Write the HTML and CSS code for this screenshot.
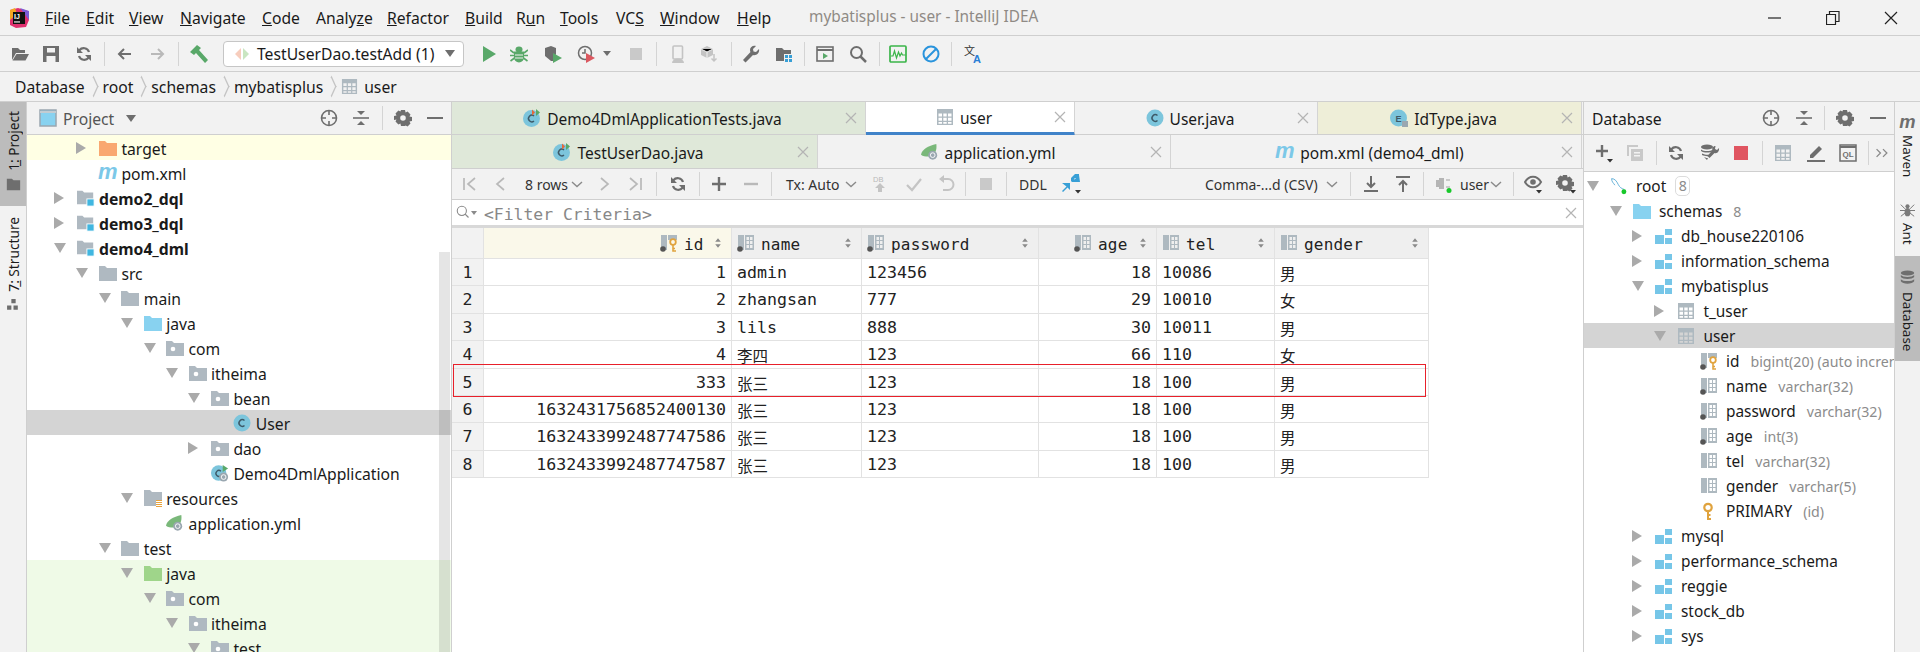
FILE: index.html
```html
<!DOCTYPE html>
<html lang="en">
<head>
<meta charset="utf-8">
<title>mybatisplus - user - IntelliJ IDEA</title>
<link rel="stylesheet" href="styles.css">
</head>
<body>
<svg class="defs" aria-hidden="true">
  <symbol id="open" viewBox="0 0 18 18"><path d="M1 3h6l2 2h5v3H5l-4 7z" fill="#6e6e6e"/><path d="M5.500 9H18l-3.500 6.500H1.500z" fill="#6e6e6e"/></symbol>
  <symbol id="save" viewBox="0 0 18 18"><path fill-rule="evenodd" d="M1 1h16v16H1zM5 3v4.500h8V3zM4.500 11v6h9v-6z" fill="#6e6e6e"/></symbol>
  <symbol id="sync" viewBox="0 0 18 18"><g fill="none" stroke="#6e6e6e" stroke-width="2.200"><path d="M14 7a5.600 5.600 0 0 0-9.600-1.800L3.500 6.400"/><path d="M4 11a5.600 5.600 0 0 0 9.600 1.800l1-1.200"/></g><path d="M2 2v6h6zM16 16v-6h-6z" fill="#6e6e6e"/></symbol>
  <symbol id="back" viewBox="0 0 18 18"><path d="M16 9H4M9 4 4 9l5 5" fill="none" stroke="#6e6e6e" stroke-width="2"/></symbol>
  <symbol id="fwd" viewBox="0 0 18 18"><path d="M2 9h12M9 4l5 5-5 5" fill="none" stroke="#b9b9b9" stroke-width="2"/></symbol>
  <symbol id="hammer" viewBox="0 0 18 18"><path d="M0 7 7 0l4 3-2 2 9 10-3 3L6 8 4 10z" fill="#59a869"/></symbol>
  <symbol id="run" viewBox="0 0 18 18"><path d="M3 1l13 8-13 8z" fill="#59a869"/></symbol>
  <symbol id="bug" viewBox="0 0 18 18"><g fill="#59a869"><ellipse cx="9" cy="4.500" rx="3.500" ry="3"/><path d="M4 6.500h10v6a5 5 0 0 1-10 0z"/></g><path d="M0 5l4 3M18 5l-4 3M0 10.500h4M18 10.500h-4M.5 16l4-3M17.500 16l-4-3" stroke="#59a869" stroke-width="1.600"/><path d="M5 10h8M5 13h8" stroke="#f2f2f2" stroke-width="1.200"/></symbol>
  <symbol id="cover" viewBox="0 0 18 18"><path d="M1 3l6-2 5 2v6l-3 7H7l-6-5z" fill="#6e6e6e"/><path d="M9 8l9 5-9 5z" fill="#59a869"/></symbol>
  <symbol id="prof" viewBox="0 0 18 18"><circle cx="8" cy="8" r="6.500" fill="none" stroke="#6e6e6e" stroke-width="1.500"/><path d="M8 4v4H5" fill="none" stroke="#6e6e6e" stroke-width="1.500"/><path d="M9 8l9 5-9 5z" fill="#db5860"/></symbol>
  <symbol id="stop" viewBox="0 0 18 18"><rect x="3" y="3" width="12" height="12" fill="#c9c9c9"/></symbol>
  <symbol id="phone" viewBox="0 0 18 18"><rect x="4" y="1" width="9.500" height="13" rx="1" fill="none" stroke="#c4c4c4" stroke-width="1.600"/><path d="M3 18a6 4.500 0 0 1 12 0z" fill="#c4c4c4"/></symbol>
  <symbol id="cube" viewBox="0 0 18 18"><path d="M7 1l6 3v6l-6 3-6-3V4z" fill="#c4c4c4"/><path d="M7 7v6M1 4l6 3 6-3" stroke="#f2f2f2"/><path d="M14 9v7M11.500 13.500 14 16l2.500-2.500" fill="none" stroke="#c4c4c4" stroke-width="1.500"/></symbol>
  <symbol id="wrench" viewBox="0 0 18 18"><path d="M17 4l-3 3-2.500-.5L11 4l3-3c-3-1-6 1-6 4 0 1 .2 1.500.5 2L1 15l2.500 2.500L11 10c3 1 7-2 6-6z" fill="#6e6e6e"/></symbol>
  <symbol id="fgrid" viewBox="0 0 18 18"><path d="M1 3h6l2 2h7v4H9v7H1z" fill="#6e6e6e"/><path d="M10 10h3v3h-3zM14 10h3v3h-3zM10 14h3v3h-3zM14 14h3v3h-3z" fill="#389fd6"/></symbol>
  <symbol id="term" viewBox="0 0 18 18"><rect x="1" y="2" width="16" height="14" fill="none" stroke="#6e6e6e" stroke-width="1.600"/><path d="M1 5h16" stroke="#6e6e6e" stroke-width="2"/><path d="M7 8l5 3-5 3z" fill="#59a869"/></symbol>
  <symbol id="search" viewBox="0 0 18 18"><circle cx="7.500" cy="7.500" r="5.500" fill="none" stroke="#6e6e6e" stroke-width="2"/><path d="M11.500 11.500 17 17" stroke="#6e6e6e" stroke-width="2.500"/></symbol>
  <symbol id="wave" viewBox="0 0 18 18"><rect x="1" y="1" width="16" height="16" rx="1" fill="none" stroke="#3bb54a" stroke-width="1.700"/><path d="M2 11h2l1.500-5 2 7 2-6 1.500 4 1.500-3 1 2h3" fill="none" stroke="#3bb54a" stroke-width="1.200"/></symbol>
  <symbol id="ban" viewBox="0 0 18 18"><circle cx="9" cy="9" r="7.500" fill="none" stroke="#2a94dc" stroke-width="2"/><path d="M4 14 14 4" stroke="#2a94dc" stroke-width="2"/></symbol>
  <symbol id="tbl" viewBox="0 0 18 18"><path fill="#aeb9c0" fill-rule="evenodd" d="M1 1h16v16H1zM2.500 5.500v3h3.500v-3zM7.300 5.500v3h3.400v-3zM12 5.500v3h3.500v-3zM2.500 9.800v3h3.500v-3zM7.300 9.800v3h3.400v-3zM12 9.800v3h3.500v-3zM2.500 14v1.700h3.500V14zM7.300 14v1.700h3.400V14zM12 14v1.700h3.500V14z"/></symbol>
  <symbol id="col" viewBox="0 0 18 18"><rect x="1" y="1" width="6" height="15" fill="#aeb9c0"/><path fill="#aeb9c0" fill-rule="evenodd" d="M8 1h9v15H8zM9.500 3v3h2.500V3zM13 3v3h2.500V3zM9.500 7v3h2.500V7zM13 7v3h2.500V7zM9.500 11v3h2.500v-3zM13 11v3h2.500v-3z"/></symbol>
  <symbol id="coln" viewBox="0 0 18 18"><use href="#col"/><circle cx="3" cy="15" r="2.800" fill="#555"/></symbol>
  <symbol id="key" viewBox="0 0 18 18"><circle cx="8" cy="5.500" r="3.700" fill="none" stroke="#e0a33e" stroke-width="2.200"/><path d="M8 9v8h3M8 13h2.500" fill="none" stroke="#e0a33e" stroke-width="2"/></symbol>
  <symbol id="colk" viewBox="0 0 18 18"><rect x="1" y="1" width="6" height="15" fill="#aeb9c0"/><path d="M8 1h9v5H8z" fill="#aeb9c0"/><circle cx="3" cy="15" r="2.800" fill="#555"/><circle cx="13" cy="8" r="2.800" fill="none" stroke="#e0a33e" stroke-width="1.800"/><path d="M13 11v6h3M13 14.500h2" fill="none" stroke="#e0a33e" stroke-width="1.600"/></symbol>
  <symbol id="fo" viewBox="0 0 18 18"><path d="M0 2h6l2 2h10v13H0z" fill="#afb9c1"/></symbol>
  <symbol id="fob" viewBox="0 0 18 18"><path d="M0 2h6l2 2h10v13H0z" fill="#88d2f0"/></symbol>
  <symbol id="fog" viewBox="0 0 18 18"><path d="M0 2h6l2 2h10v13H0z" fill="#9fd58a"/></symbol>
  <symbol id="foo" viewBox="0 0 18 18"><path d="M0 2h6l2 2h10v13H0z" fill="#f9a870"/></symbol>
  <symbol id="pkg" viewBox="0 0 18 18"><path d="M0 2h6l2 2h10v13H0z" fill="#afb9c1"/><circle cx="7" cy="10" r="2.300" fill="#fff"/></symbol>
  <symbol id="mod" viewBox="0 0 20 18"><path d="M0 1h6l2 2h10v13H0z" fill="#afb9c1"/><rect x="11" y="10" width="8" height="8" fill="#40b6e0" stroke="#fff"/></symbol>
  <symbol id="res" viewBox="0 0 18 18"><path d="M0 1h6l2 2h10v8h-6v6H0z" fill="#afb9c1"/><path d="M12 11.500h6M12 13.500h6M12 15.500h6M12 17.500h6" stroke="#e8a33d"/></symbol>
  <symbol id="cls" viewBox="0 0 18 18"><circle cx="9" cy="9" r="8.500" fill="#7cc5dc"/><path d="M11.500 6.500a3.300 3.300 0 1 0 0 5" fill="none" stroke="#3d5a68" stroke-width="1.500"/></symbol>
  <symbol id="clst" viewBox="0 0 18 18"><circle cx="8.500" cy="9.500" r="8.500" fill="#7cc5dc"/><path d="M11 7a3.300 3.300 0 1 0 0 5" fill="none" stroke="#3d5a68" stroke-width="1.500"/><path d="M9 .5 12 3.500 9 6.500z" fill="#e6673a"/><path d="M13 0l4 3.500-4 3.500z" fill="#59a869"/></symbol>
  <symbol id="app" viewBox="0 0 20 20"><circle cx="8.500" cy="10" r="8.500" fill="#7cc5dc"/><path d="M11 8a3.300 3.300 0 1 0 0 5" fill="none" stroke="#3d5a68" stroke-width="1.500"/><path d="M13 1l6 4-6 4z" fill="#59a869"/><circle cx="14" cy="14.500" r="5" fill="#9aa7b0"/><circle cx="14" cy="14.500" r="2.600" fill="none" stroke="#fff"/></symbol>
  <symbol id="leaf" viewBox="0 0 20 20"><path d="M0 13C1 7 8 3 17 1c1 6-1 14-9 14-3 0-6 0-8-2z" fill="#7ab87a"/><circle cx="13" cy="13.500" r="5" fill="#9aa7b0"/><circle cx="13" cy="13.500" r="2.600" fill="none" stroke="#fff"/></symbol>
  <symbol id="crosshair" viewBox="0 0 18 18"><circle cx="9" cy="9" r="7.500" fill="none" stroke="#6e6e6e" stroke-width="1.600"/><path d="M9 1v5M9 12v5M1 9h5M12 9h5" stroke="#6e6e6e" stroke-width="1.600"/></symbol>
  <symbol id="coll" viewBox="0 0 18 18"><path d="M1 9h16" stroke="#6e6e6e" stroke-width="1.600"/><path d="M5 2h8l-4 4zM5 16h8l-4-4z" fill="#6e6e6e"/></symbol>
  <symbol id="gear" viewBox="0 0 18 18"><path fill="#6e6e6e" fill-rule="evenodd" d="M7 1h4l.6 2.500 2-1 2.900 2.900-1 2 2.500.6v4l-2.500.6 1 2-2.900 2.900-2-1L11 17H7l-.6-2.500-2 1L1.500 12.600l1-2L0 11V7l2.500-.6-1-2L4.400 1.500l2 1zM9 6.200a2.800 2.800 0 1 0 0 5.600 2.800 2.800 0 0 0 0-5.600z"/></symbol>
  <symbol id="gearc" viewBox="0 0 20 20"><use href="#gear" width="18" height="18"/><path d="M14 16h6l-3 3.500z" fill="#333"/></symbol>
  <symbol id="minus" viewBox="0 0 18 18"><path d="M1 9h16" stroke="#6e6e6e" stroke-width="2"/></symbol>
  <symbol id="first" viewBox="0 0 18 18"><path d="M3 3v12M14 3 7 9l7 6" fill="none" stroke="#b9b9b9" stroke-width="1.700"/></symbol>
  <symbol id="prev" viewBox="0 0 18 18"><path d="M12 3 5 9l7 6" fill="none" stroke="#b9b9b9" stroke-width="1.700"/></symbol>
  <symbol id="next" viewBox="0 0 18 18"><path d="M6 3l7 6-7 6" fill="none" stroke="#b9b9b9" stroke-width="1.700"/></symbol>
  <symbol id="last" viewBox="0 0 18 18"><path d="M15 3v12M4 3l7 6-7 6" fill="none" stroke="#b9b9b9" stroke-width="1.700"/></symbol>
  <symbol id="plus" viewBox="0 0 18 18"><path d="M9 2v14M2 9h14" stroke="#6e6e6e" stroke-width="2.400"/></symbol>
  <symbol id="plusc" viewBox="0 0 20 20"><path d="M8 2v12M2 8h12" stroke="#6e6e6e" stroke-width="2.400"/><path d="M13 16h6l-3 3.500z" fill="#333"/></symbol>
  <symbol id="minusl" viewBox="0 0 18 18"><path d="M2 9h14" stroke="#b9b9b9" stroke-width="2.400"/></symbol>
  <symbol id="vee" viewBox="0 0 18 18"><path d="M4 7l5 4.500L14 7" fill="none" stroke="#8a8a8a" stroke-width="1.400"/></symbol>
  <symbol id="check" viewBox="0 0 18 18"><path d="M2 10l5 5L16 4" fill="none" stroke="#c4c4c4" stroke-width="2.200"/></symbol>
  <symbol id="undo" viewBox="0 0 18 18"><path d="M5 4h6a5 5 0 0 1 0 11H6" fill="none" stroke="#c4c4c4" stroke-width="2"/><path d="M7 0v8L2 4z" fill="#c4c4c4"/></symbol>
  <symbol id="cmp" viewBox="0 0 20 20"><path d="M17 0v4h-4L9 8V4l4-4zM18 8h-8V3l2.500 2.500L17 1z" fill="#389fd6"/><path d="M0 9h8v7l-2.500-2.500L1 18l-1-1 4.500-4.500z" fill="#389fd6"/><path d="M13 16h6l-3 3.500z" fill="#333"/></symbol>
  <symbol id="dl" viewBox="0 0 18 18"><path d="M9 1v10M5 8l4 4 4-4" fill="none" stroke="#6e6e6e" stroke-width="2"/><path d="M2 16h14" stroke="#6e6e6e" stroke-width="2"/></symbol>
  <symbol id="ul" viewBox="0 0 18 18"><path d="M9 17V7M5 10l4-4 4 4" fill="none" stroke="#6e6e6e" stroke-width="2"/><path d="M2 2h14" stroke="#6e6e6e" stroke-width="2"/></symbol>
  <symbol id="conn" viewBox="0 0 18 18"><path d="M1 5h3V3h5v11H4v-2H1z" fill="#b5b5b5"/><path d="M11 4h4v2h-4zM11 11h4v2h-4z" fill="#c9c9c9"/><circle cx="14" cy="15.500" r="2.500" fill="#18c82a"/></symbol>
  <symbol id="eye" viewBox="0 0 20 20"><path d="M1 8c4-7 12-7 16 0-4 7-12 7-16 0z" fill="none" stroke="#6e6e6e" stroke-width="2"/><circle cx="9" cy="8" r="2.800" fill="#6e6e6e"/><path d="M12 16h6l-3 3.500z" fill="#333"/></symbol>
  <symbol id="copy" viewBox="0 0 18 18"><path d="M1 1h11v2H3v9H1z" fill="#c9c9c9"/><path fill="#c9c9c9" fill-rule="evenodd" d="M5 5h12v12H5zM8 8v1.500h6V8zM8 11v1.500h6V11z"/></symbol>
  <symbol id="dbtool" viewBox="0 0 20 18"><ellipse cx="7" cy="3" rx="6" ry="2.500" fill="#6e6e6e"/><path d="M1 5.500c3 2 9 2 12 0v1.500c-3 2-9 2-12 0zM2 9.500c3 1.500 6 1.500 8 1v1.500c-3 .5-6 0-8-1zM4 13c2 1 3 1 4 1l-1 2z" fill="#6e6e6e"/><path d="M19 4l-2 2-2-1 .5-3c-2 0-4 2-3 4l-5 6 2 2 5-5c3 1 5-2 4.500-5z" fill="#6e6e6e"/></symbol>
  <symbol id="red" viewBox="0 0 18 18"><rect x="2" y="2" width="14" height="14" fill="#e05561"/></symbol>
  <symbol id="edit" viewBox="0 0 18 18"><path d="M3 11 12 2l3 3-9 9H3z" fill="#6e6e6e"/><path d="M0 17h18" stroke="#6e6e6e" stroke-width="2"/></symbol>
  <symbol id="mysql" viewBox="0 0 20 22"><path d="M1 2c4 0 6 3 8 7s4 5 7 6l2 3" fill="none" stroke="#4aa3d0" stroke-width="1"/><path d="M1 2c0 4 2 5 4 8" fill="none" stroke="#4aa3d0" stroke-width="1"/><circle cx="16" cy="18" r="3" fill="#18c82a"/></symbol>
  <symbol id="schema" viewBox="0 0 18 18"><rect x="0" y="8" width="9" height="9" fill="#76c6e8"/><rect x="10" y="2" width="7" height="6" fill="#76c6e8"/><rect x="10" y="11" width="7" height="6" fill="#76c6e8"/></symbol>
  <symbol id="spider" viewBox="0 0 18 18"><ellipse cx="9" cy="11" rx="3.500" ry="5" fill="#7a7a7a"/><circle cx="9" cy="4" r="2.500" fill="#7a7a7a"/><path d="M1 2l5 5M17 2l-5 5M0 9h6M18 9h-6M1 16l5-4M17 16l-5-4" stroke="#7a7a7a" stroke-width="1.200"/></symbol>
  <symbol id="dbcyl" viewBox="0 0 18 18"><ellipse cx="9" cy="3.500" rx="8" ry="3" fill="#6e6e6e"/><path d="M1 6c2 3 14 3 16 0v2.500c-2 3-14 3-16 0zM1 11c2 3 14 3 16 0v2.500c-2 4-14 4-16 0z" fill="#6e6e6e"/></symbol>
  <symbol id="wfold" viewBox="0 0 18 18"><path d="M1 2h6l2 2h8v12H1z" fill="#6e6e6e"/></symbol>
  <symbol id="struct" viewBox="0 0 14 14"><path d="M5 1h4v4H5zM1 7h4v4H1zM7 7h4v4H7z" fill="#6e6e6e"/></symbol>
  <symbol id="win" viewBox="0 0 18 18"><rect x="1" y="1" width="16" height="16" fill="#88d2f0" stroke="#9aa7b0" stroke-width="1.500"/><path d="M1 3h16" stroke="#c3ccd2" stroke-width="2"/></symbol>
  <symbol id="search2" viewBox="0 0 18 18"><circle cx="7" cy="7" r="5.500" fill="none" stroke="#8a8a8a" stroke-width="1.300"/><path d="M11 11l4 4" stroke="#8a8a8a" stroke-width="1.500"/></symbol>
  <symbol id="cross" viewBox="0 0 14 14"><path d="M2 2l10 10M12 2 2 12" stroke="#b4b4b4" stroke-width="1.200"/></symbol>
  <symbol id="wmin" viewBox="0 0 14 14"><path d="M0 7h13" stroke="#222" stroke-width="1.200"/></symbol>
  <symbol id="wmax" viewBox="0 0 14 14"><path d="M.5 3.500h9v10h-9zM3.500 3.500v-3h9.500v10h-3.500" fill="none" stroke="#222" stroke-width="1.200"/></symbol>
  <symbol id="wcls" viewBox="0 0 14 14"><path d="M1 1l12 12M13 1 1 13" stroke="#222" stroke-width="1.200"/></symbol>
  <symbol id="sort" viewBox="0 0 10 14"><path d="M5 1l3.500 4.500h-7zM5 13 1.500 8.500h7z" fill="#8a8a8a"/></symbol>
  <symbol id="more" viewBox="0 0 14 14"><path d="M2 4l3 3-3 3M7 4l3 3-3 3" fill="none" stroke="#8a8a8a"/></symbol>
  <symbol id="diamonds" viewBox="0 0 18 18"><path d="M8 3 2 9l6 6z" fill="#f7cdbd"/><path d="M10 3l6 6-6 6z" fill="#c9e6c1"/></symbol>
</svg>

<div class="app">
  <header class="titlebar">
    <svg class="logo" viewBox="0 0 20 20"><path d="M1 2 9 0l10 3 1 9-3 7-10 1-6-3z" fill="#e0316f"/><path d="M11 0l9 3v9z" fill="#7a5bd6"/><path d="M1 2 6 0l2 6-7 6z" fill="#f5a623"/><rect x="4" y="4" width="12" height="12" fill="#111"/><rect x="5" y="13.400" width="6" height="1.100" fill="#fff"/><text x="5" y="11" class="logo-t">IJ</text></svg>
    <span><u>F</u>ile</span><span><u>E</u>dit</span><span><u>V</u>iew</span><span><u>N</u>avigate</span><span><u>C</u>ode</span><span>Analy<u>z</u>e</span><span><u>R</u>efactor</span><span><u>B</u>uild</span><span>R<u>u</u>n</span><span><u>T</u>ools</span><span>VC<u>S</u></span><span><u>W</u>indow</span><span><u>H</u>elp</span>
    <span class="apptitle">mybatisplus - user - IntelliJ IDEA</span>
    <div class="winctl">
      <svg class="wi"><use href="#wmin"/></svg>
      <svg class="wi"><use href="#wmax"/></svg>
      <svg class="wi"><use href="#wcls"/></svg>
    </div>
  </header>

  <div class="maintb tb">
    <svg class="ic"><use href="#open"/></svg><svg class="ic"><use href="#save"/></svg><svg class="ic"><use href="#sync"/></svg><i class="sep"></i>
    <svg class="ic"><use href="#back"/></svg><svg class="ic"><use href="#fwd"/></svg><i class="sep"></i>
    <svg class="ic"><use href="#hammer"/></svg>
    <div class="runcfg"><svg class="ic"><use href="#diamonds"/></svg><span>TestUserDao.testAdd (1)</span><i class="caret"></i></div>
    <svg class="ic"><use href="#run"/></svg><svg class="ic"><use href="#bug"/></svg><svg class="ic"><use href="#cover"/></svg><svg class="ic"><use href="#prof"/></svg><i class="caret small"></i>
    <svg class="ic"><use href="#stop"/></svg><i class="sep"></i>
    <svg class="ic"><use href="#phone"/></svg><svg class="ic"><use href="#cube"/></svg><i class="sep"></i>
    <svg class="ic"><use href="#wrench"/></svg><svg class="ic"><use href="#fgrid"/></svg><i class="sep"></i>
    <svg class="ic"><use href="#term"/></svg><svg class="ic"><use href="#search"/></svg><i class="sep"></i>
    <svg class="ic"><use href="#wave"/></svg><svg class="ic"><use href="#ban"/></svg><i class="sep"></i>
    <svg class="ic ic20" viewBox="0 0 20 20"><text x="0" y="11" class="tr-a">文</text><text x="9" y="19" class="tr-b">A</text></svg>
  </div>

  <nav class="crumbs">
    <span>Database</span><i class="chev"></i><span>root</span><i class="chev"></i><span>schemas</span><i class="chev"></i><span>mybatisplus</span><i class="chev"></i><svg class="ic ic-c"><use href="#tbl"/></svg><span>user</span>
  </nav>

  <main class="work">
    <aside class="stripe left">
      <div class="st active st-project"><span class="vt">1̲: Project</span><svg class="si"><use href="#wfold"/></svg></div>
      <div class="st st-structure"><span class="vt">7̲: Structure</span><svg class="si"><use href="#struct"/></svg></div>
    </aside>

    <section class="panel project">
      <div class="phead prj-head tb">
        <svg class="ic"><use href="#win"/></svg><span class="ptitle gray">Project</span><i class="caret"></i>
        <svg class="ic"><use href="#crosshair"/></svg><svg class="ic"><use href="#coll"/></svg><i class="sep"></i><svg class="ic"><use href="#gear"/></svg><svg class="ic"><use href="#minus"/></svg>
      </div>
      <div class="tree ptree">
        <div class="row d1 yel"><i class="a r"></i><svg class="ti"><use href="#foo"/></svg><span>target</span></div>
        <div class="row d1"><i class="a"></i><svg class="ti" viewBox="0 0 18 18"><text x="-1" y="15" class="mvn-t">m</text></svg><span>pom.xml</span></div>
        <div class="row d0"><i class="a r"></i><svg class="ti"><use href="#mod"/></svg><b>demo2_dql</b></div>
        <div class="row d0"><i class="a r"></i><svg class="ti"><use href="#mod"/></svg><b>demo3_dql</b></div>
        <div class="row d0"><i class="a d"></i><svg class="ti"><use href="#mod"/></svg><b>demo4_dml</b></div>
        <div class="row d1"><i class="a d"></i><svg class="ti"><use href="#fo"/></svg><span>src</span></div>
        <div class="row d2"><i class="a d"></i><svg class="ti"><use href="#fo"/></svg><span>main</span></div>
        <div class="row d3"><i class="a d"></i><svg class="ti"><use href="#fob"/></svg><span>java</span></div>
        <div class="row d4"><i class="a d"></i><svg class="ti"><use href="#pkg"/></svg><span>com</span></div>
        <div class="row d5"><i class="a d"></i><svg class="ti"><use href="#pkg"/></svg><span>itheima</span></div>
        <div class="row d6"><i class="a d"></i><svg class="ti"><use href="#pkg"/></svg><span>bean</span></div>
        <div class="row d7 sel"><i class="a"></i><svg class="ti"><use href="#cls"/></svg><span>User</span></div>
        <div class="row d6"><i class="a r"></i><svg class="ti"><use href="#pkg"/></svg><span>dao</span></div>
        <div class="row d6"><i class="a"></i><svg class="ti"><use href="#app"/></svg><span>Demo4DmlApplication</span></div>
        <div class="row d3"><i class="a d"></i><svg class="ti"><use href="#res"/></svg><span>resources</span></div>
        <div class="row d4"><i class="a"></i><svg class="ti"><use href="#leaf"/></svg><span>application.yml</span></div>
        <div class="row d2"><i class="a d"></i><svg class="ti"><use href="#fo"/></svg><span>test</span></div>
        <div class="row d3 grn"><i class="a d"></i><svg class="ti"><use href="#fog"/></svg><span>java</span></div>
        <div class="row d4 grn"><i class="a d"></i><svg class="ti"><use href="#pkg"/></svg><span>com</span></div>
        <div class="row d5 grn"><i class="a d"></i><svg class="ti"><use href="#pkg"/></svg><span>itheima</span></div>
        <div class="row d6 grn"><i class="a d"></i><svg class="ti"><use href="#pkg"/></svg><span>test</span></div>
      </div>
      <div class="thumb"></div>
    </section>

    <section class="editor">
      <div class="tabs">
        <div class="tab t1 green"><span class="tc"><svg class="ti"><use href="#clst"/></svg><span>Demo4DmlApplicationTests.java</span></span><svg class="x"><use href="#cross"/></svg></div>
        <div class="tab t2 cur"><span class="tc"><svg class="ti"><use href="#tbl"/></svg><span>user</span></span><svg class="x"><use href="#cross"/></svg></div>
        <div class="tab t3"><span class="tc"><svg class="ti"><use href="#cls"/></svg><span>User.java</span></span><svg class="x"><use href="#cross"/></svg></div>
        <div class="tab t4 yellow"><span class="tc"><svg class="ti" viewBox="0 0 18 18"><circle cx="8.500" cy="9" r="8.500" fill="#7cc5dc"/><text x="5.500" y="12.500" class="gl">E</text><rect x="12" y="12" width="6" height="6" fill="#9aa7b0"/></svg><span>IdType.java</span></span><svg class="x"><use href="#cross"/></svg></div>
      </div>
      <div class="tabs r2">
        <div class="tab t5 green"><span class="tc"><svg class="ti"><use href="#clst"/></svg><span>TestUserDao.java</span></span><svg class="x"><use href="#cross"/></svg></div>
        <div class="tab t6"><span class="tc"><svg class="ti"><use href="#leaf"/></svg><span>application.yml</span></span><svg class="x"><use href="#cross"/></svg></div>
        <div class="tab t7"><span class="tc"><svg class="ti" viewBox="0 0 18 18"><text x="-1" y="15" class="mvn-t">m</text></svg><span>pom.xml (demo4_dml)</span></span><svg class="x"><use href="#cross"/></svg></div>
      </div>
      <div class="gridtb tb">
        <svg class="ic"><use href="#first"/></svg><svg class="ic"><use href="#prev"/></svg><span class="ts">8 rows</span><svg class="ic"><use href="#vee"/></svg><svg class="ic"><use href="#next"/></svg><svg class="ic"><use href="#last"/></svg><i class="sep"></i>
        <svg class="ic"><use href="#sync"/></svg><i class="sep"></i>
        <svg class="ic"><use href="#plus"/></svg><svg class="ic"><use href="#minusl"/></svg><i class="sep"></i>
        <span class="ts">Tx: Auto</span><svg class="ic"><use href="#vee"/></svg>
        <svg class="ic" viewBox="0 0 18 18"><text x="2" y="7" class="db-t">DB</text><path d="M9 8l5 5h-3v4H7v-4H4z" fill="#c4c4c4"/></svg><svg class="ic"><use href="#check"/></svg><svg class="ic"><use href="#undo"/></svg><i class="sep"></i>
        <svg class="ic"><use href="#stop"/></svg><i class="sep"></i>
        <span class="ts">DDL</span><svg class="ic ic20"><use href="#cmp"/></svg>
        <span class="ts">Comma-...d (CSV)</span><svg class="ic"><use href="#vee"/></svg><i class="sep"></i>
        <svg class="ic"><use href="#dl"/></svg><svg class="ic"><use href="#ul"/></svg><i class="sep"></i>
        <svg class="ic"><use href="#conn"/></svg><span class="ts">user</span><svg class="ic"><use href="#vee"/></svg><i class="sep"></i>
        <svg class="ic ic20"><use href="#eye"/></svg><svg class="ic ic20"><use href="#gearc"/></svg>
      </div>
      <div class="filter">
        <svg class="fi"><use href="#search2"/></svg><i class="caret tiny"></i><span class="ftext">&lt;Filter Criteria&gt;</span><svg class="x fx"><use href="#cross"/></svg>
      </div>
      <div class="grid">
        <div class="data">
          <div class="h corner"></div>
          <div class="h hid"><svg class="hi"><use href="#colk"/></svg><span>id</span><svg class="so"><use href="#sort"/></svg></div>
          <div class="h"><svg class="hi"><use href="#coln"/></svg><span>name</span><svg class="so"><use href="#sort"/></svg></div>
          <div class="h"><svg class="hi"><use href="#coln"/></svg><span>password</span><svg class="so"><use href="#sort"/></svg></div>
          <div class="h hr"><svg class="hi"><use href="#coln"/></svg><span>age</span><svg class="so"><use href="#sort"/></svg></div>
          <div class="h"><svg class="hi"><use href="#col"/></svg><span>tel</span><svg class="so"><use href="#sort"/></svg></div>
          <div class="h"><svg class="hi"><use href="#col"/></svg><span>gender</span><svg class="so"><use href="#sort"/></svg></div>

          <div class="n">1</div><div class="c num">1</div><div class="c">admin</div><div class="c">123456</div><div class="c num">18</div><div class="c">10086</div><div class="c"><span class="cj">男</span></div>
          <div class="n">2</div><div class="c num">2</div><div class="c">zhangsan</div><div class="c">777</div><div class="c num">29</div><div class="c">10010</div><div class="c"><span class="cj">女</span></div>
          <div class="n">3</div><div class="c num">3</div><div class="c">lils</div><div class="c">888</div><div class="c num">30</div><div class="c">10011</div><div class="c"><span class="cj">男</span></div>
          <div class="n">4</div><div class="c num">4</div><div class="c"><span class="cj">李四</span></div><div class="c">123</div><div class="c num">66</div><div class="c">110</div><div class="c"><span class="cj">女</span></div>
          <div class="n">5</div><div class="c num">333</div><div class="c"><span class="cj">张三</span></div><div class="c">123</div><div class="c num">18</div><div class="c">100</div><div class="c"><span class="cj">男</span></div>
          <div class="n">6</div><div class="c num">1632431756852400130</div><div class="c"><span class="cj">张三</span></div><div class="c">123</div><div class="c num">18</div><div class="c">100</div><div class="c"><span class="cj">男</span></div>
          <div class="n">7</div><div class="c num">1632433992487747586</div><div class="c"><span class="cj">张三</span></div><div class="c">123</div><div class="c num">18</div><div class="c">100</div><div class="c"><span class="cj">男</span></div>
          <div class="n">8</div><div class="c num">1632433992487747587</div><div class="c"><span class="cj">张三</span></div><div class="c">123</div><div class="c num">18</div><div class="c">100</div><div class="c"><span class="cj">男</span></div>
        </div>
        <div class="redbox"></div>
      </div>
    </section>

    <section class="panel dbpanel">
      <div class="phead db-head tb">
        <span class="ptitle">Database</span>
        <svg class="ic"><use href="#crosshair"/></svg><svg class="ic"><use href="#coll"/></svg><i class="sep"></i><svg class="ic"><use href="#gear"/></svg><svg class="ic"><use href="#minus"/></svg>
      </div>
      <div class="db-tb tb">
        <svg class="ic ic20"><use href="#plusc"/></svg><svg class="ic"><use href="#copy"/></svg><i class="sep"></i>
        <svg class="ic"><use href="#sync"/></svg><svg class="ic ic20"><use href="#dbtool"/></svg><svg class="ic"><use href="#red"/></svg><i class="sep"></i>
        <svg class="ic"><use href="#tbl"/></svg><svg class="ic"><use href="#edit"/></svg>
        <svg class="ic" viewBox="0 0 18 18"><rect x="1" y="1" width="16" height="16" fill="none" stroke="#6e6e6e" stroke-width="1.500"/><path d="M1 3h16" stroke="#6e6e6e" stroke-width="2"/><text x="3.500" y="13" class="ql-t">QL</text></svg><i class="sep"></i>
        <svg class="ic"><use href="#more"/></svg>
      </div>
      <div class="tree dbtree">
        <div class="row e0"><i class="a d"></i><svg class="ti"><use href="#mysql"/></svg><span>root</span><em class="badge">8</em></div>
        <div class="row e1"><i class="a d"></i><svg class="ti"><use href="#fob"/></svg><span>schemas</span><em class="hint">8</em></div>
        <div class="row e2"><i class="a r"></i><svg class="ti"><use href="#schema"/></svg><span>db_house220106</span></div>
        <div class="row e2"><i class="a r"></i><svg class="ti"><use href="#schema"/></svg><span>information_schema</span></div>
        <div class="row e2"><i class="a d"></i><svg class="ti"><use href="#schema"/></svg><span>mybatisplus</span></div>
        <div class="row e3"><i class="a r"></i><svg class="ti"><use href="#tbl"/></svg><span>t_user</span></div>
        <div class="row e3 sel"><i class="a d"></i><svg class="ti"><use href="#tbl"/></svg><span>user</span></div>
        <div class="row e4"><i class="a"></i><svg class="ti"><use href="#colk"/></svg><span>id</span><em class="hint">bigint(20) (auto increment)</em></div>
        <div class="row e4"><i class="a"></i><svg class="ti"><use href="#coln"/></svg><span>name</span><em class="hint">varchar(32)</em></div>
        <div class="row e4"><i class="a"></i><svg class="ti"><use href="#coln"/></svg><span>password</span><em class="hint">varchar(32)</em></div>
        <div class="row e4"><i class="a"></i><svg class="ti"><use href="#coln"/></svg><span>age</span><em class="hint">int(3)</em></div>
        <div class="row e4"><i class="a"></i><svg class="ti"><use href="#col"/></svg><span>tel</span><em class="hint">varchar(32)</em></div>
        <div class="row e4"><i class="a"></i><svg class="ti"><use href="#col"/></svg><span>gender</span><em class="hint">varchar(5)</em></div>
        <div class="row e4"><i class="a"></i><svg class="ti"><use href="#key"/></svg><span>PRIMARY</span><em class="hint">(id)</em></div>
        <div class="row e2"><i class="a r"></i><svg class="ti"><use href="#schema"/></svg><span>mysql</span></div>
        <div class="row e2"><i class="a r"></i><svg class="ti"><use href="#schema"/></svg><span>performance_schema</span></div>
        <div class="row e2"><i class="a r"></i><svg class="ti"><use href="#schema"/></svg><span>reggie</span></div>
        <div class="row e2"><i class="a r"></i><svg class="ti"><use href="#schema"/></svg><span>stock_db</span></div>
        <div class="row e2"><i class="a r"></i><svg class="ti"><use href="#schema"/></svg><span>sys</span></div>
      </div>
    </section>

    <aside class="stripe right">
      <div class="st st-maven"><svg class="si" viewBox="0 0 18 18"><text x="-1" y="15" class="mvn-g">m</text></svg><span class="vr">Maven</span></div>
      <div class="st st-ant"><svg class="si"><use href="#spider"/></svg><span class="vr">Ant</span></div>
      <div class="st active st-db"><svg class="si"><use href="#dbcyl"/></svg><span class="vr">Database</span></div>
    </aside>
  </main>
</div>
</body>
</html>
```

FILE: styles.css
```css
* { box-sizing: border-box; }
html, body { margin: 0; height: 652px; overflow: hidden; background: #f2f2f2; }
body { font-family: "Noto Sans", "Noto Sans CJK SC", sans-serif; font-size: 15.700px; color: #1a1a1a; }
.defs { position: absolute; width: 0; height: 0; }
i, em { font-style: normal; display: block; }
svg { display: block; flex-shrink: 0; overflow: visible; }

.logo-t { font: bold 7px "Liberation Sans", sans-serif; fill: #fff; }
.tr-a { font: 11px "Noto Sans CJK SC", sans-serif; fill: #333; }
.tr-b { font: bold 11px "Liberation Sans", sans-serif; fill: #2a7fd6; }
.gl { font: bold 9px "Liberation Sans", sans-serif; fill: #3d5a68; }
.mvn-t { font: italic bold 22px "Liberation Sans", sans-serif; fill: #7cc8e8; }
.mvn-g { font: italic bold 22px "Liberation Sans", sans-serif; fill: #6e6e6e; }
.db-t { font: 7.500px "Liberation Sans", sans-serif; fill: #b9b9b9; }
.ql-t { font: bold 8px "Liberation Sans", sans-serif; fill: #6e6e6e; }

.app { display: flex; flex-direction: column; height: 652px; }

/* title bar */
.titlebar {
  height: 36px; flex: none; border-bottom: 1px solid #cfcfcf;
  display: grid; align-items: center; padding-left: 9px;
  grid-template-columns: 36px 41px 43px 51px 82px 54px 71px 78px 51px 44px 56px 44px 77px 72px 240px 1fr;
  font-size: 15.700px;
}
.logo { width: 20px; height: 20px; }
.apptitle { color: #8f8a85; font-size: 15.400px; margin-top: -2px; }
.winctl { display: flex; justify-content: flex-end; }
.wi { width: 14px; height: 14px; margin: 0 22px; }

/* toolbars */
.tb { display: grid; align-items: center; justify-items: start; }
.ic { width: 18px; height: 18px; }
.ic20 { width: 20px; height: 20px; }
.sep { width: 1px; height: 24px; background: #d4d4d4; margin-left: 9px; }
.caret { width: 0; height: 0; border-left: 5.500px solid transparent; border-right: 5.500px solid transparent; border-top: 7px solid #6e6e6e; }
.caret.small { border-left-width: 4.500px; border-right-width: 4.500px; border-top-width: 5px; margin-left: 4px; }
.caret.tiny { border-left-width: 3px; border-right-width: 3px; border-top-width: 4px; border-top-color: #8a8a8a; }

.maintb {
  height: 36px; flex: none; border-bottom: 1px solid #cfcfcf; padding-left: 11px;
  grid-template-columns: 31px 33px 20px 20px 34px 20px 21px 33px 257px 30px 34px 33px 22px 28px 20px 22px 31px 22px 20px 33px 20px 21px 33px 21px 19px 33px 20px 22px auto;
}
.runcfg {
  width: 241px; height: 26px; background: #fff; border: 1px solid #c6c6c6; border-radius: 4px;
  display: flex; align-items: center; padding-left: 9px;
}
.runcfg span { margin-left: 6px; flex: 1; white-space: nowrap; }
.runcfg .caret { margin-right: 8px; }

/* breadcrumbs */
.crumbs {
  height: 30px; flex: none; border-bottom: 1px solid #cfcfcf; padding-left: 15px;
  display: flex; align-items: center;
}
.chev { width: 7px; height: 7px; border-right: 1px solid #c4c4c4; border-top: 1px solid #c4c4c4; transform: scale(1, 2.200) rotate(45deg); margin: 0 6px 0 5px; }
.ic-c { width: 17px; height: 17px; margin-right: 6px; }

/* main */
.work { flex: 1; min-height: 0; display: flex; }
.stripe { flex: none; display: flex; flex-direction: column; font-size: 13.700px; overflow: hidden; }
.stripe.left { width: 27px; border-right: 1px solid #cfcfcf; }
.stripe.right { width: 26px; border-left: 1px solid #cfcfcf; font-size: 13.400px; }
.st { display: flex; flex-direction: column; align-items: center; }
.st.active { background: #bcbcbc; }
.vt { writing-mode: vertical-rl; transform: rotate(180deg); white-space: nowrap; }
.vr { writing-mode: vertical-rl; white-space: nowrap; }
.si { width: 15px; height: 15px; }
.st-project { height: 104px; padding-top: 9px; gap: 6px; }
.st-structure { padding-top: 11px; gap: 6px; }
.st-maven { height: 98px; padding-top: 13px; gap: 5px; }
.st-ant { height: 56px; padding-top: 3px; gap: 5px; }
.st-db { height: 105px; padding-top: 14px; gap: 7px; }

.panel { flex: none; position: relative; background: #fff; display: flex; flex-direction: column; overflow: hidden; }
.project { width: 425px; border-right: 1px solid #cfcfcf; }
.dbpanel { width: 311px; border-left: 1px solid #cfcfcf; }
.phead { height: 33px; flex: none; background: #f2f2f2; border-bottom: 1px solid #cfcfcf; }
.prj-head { padding-left: 12px; grid-template-columns: 24px 63px 194px 32px 21px 21px 32px auto; }
.db-head { padding-left: 8px; grid-template-columns: 170px 33px 20px 21px 33px auto; }
.ptitle { padding-top: 2px; }
.gray { color: #555; }
.db-tb {
  height: 37px; flex: none; background: #f2f2f2; border-bottom: 1px solid #cfcfcf; padding-left: 10px;
  grid-template-columns: 32px 21px 20px 33px 32px 21px 21px 33px 32px 20px 15px auto;
}

.tree { flex: 1; overflow: hidden; }
.row { height: 25px; display: flex; align-items: center; white-space: nowrap; }
.row > span, .row > b { padding-top: 2px; }
.row b { font-weight: 700; }
.a { width: 22.500px; flex: none; }
.a.r::before { content: ""; display: block; width: 0; height: 0; border-left: 10px solid #aaa; border-top: 6px solid transparent; border-bottom: 6px solid transparent; }
.a.d::before { content: ""; display: block; width: 0; height: 0; border-top: 10px solid #aaa; border-left: 6px solid transparent; border-right: 6px solid transparent; }
.ti { width: 18px; height: 18px; margin-right: 4.500px; }
.yel { background: #ffffe4; }
.grn { background: #effae7; }
.sel { background: #d4d4d4; }
.d0 { padding-left: 27px; }
.d1 { padding-left: 49.400px; }
.d2 { padding-left: 71.800px; }
.d3 { padding-left: 94.200px; }
.d4 { padding-left: 116.600px; }
.d5 { padding-left: 139px; }
.d6 { padding-left: 161.400px; }
.d7 { padding-left: 183.800px; }
.thumb { position: absolute; left: 412px; top: 150px; width: 11px; bottom: 0; background: rgba(0, 0, 0, .1); }

.dbtree { font-size: 15.400px; padding-top: 1px; }
.dbtree .a { width: 23px; }
.dbtree .ti { margin-right: 8px; }
.e0 { padding-left: 3px; }
.e1 { padding-left: 26px; }
.e2 { padding-left: 48px; }
.e3 { padding-left: 70.400px; }
.e4 { padding-left: 93px; }
.hint { color: #8c8c8c; font-size: 14.200px; margin-left: 11px; padding-top: 2px; }
.badge { color: #8c8c8c; font-size: 14.200px; border: 1px solid #dcdcdc; border-radius: 5px; width: 15px; height: 20px; line-height: 18px; text-align: center; margin-left: 9px; }

/* editor */
.editor { flex: 1; min-width: 0; display: flex; flex-direction: column; background: #fff; }
.tabs { height: 33px; flex: none; display: flex; background: #f2f2f2; border-bottom: 1px solid #cfcfcf; font-size: 15.500px; }
.tabs.r2 { height: 34px; }
.tab { display: grid; grid-template-columns: 1fr auto; align-items: center; height: 100%; border-right: 1px solid #d4d4d4; }
.tc { display: flex; justify-content: center; align-items: center; white-space: nowrap; padding-left: 9px; }
.tc > span { padding-top: 2px; }
.tc .ti { margin-right: 6px; }
.x { width: 14px; height: 14px; margin-right: 7px; }
.t1 { width: 414px; }
.t2 { width: 209px; }
.t3 { width: 243px; }
.t4 { width: 264px; }
.t5 { width: 366px; }
.t6 { width: 353px; }
.t7 { width: 411px; }
.green { background: #dfe8d9; }
.yellow { background: #eeeed8; }
.cur { background: #fff; height: 34px; border-bottom: 4px solid #4083c9; }

.gridtb {
  height: 31px; flex: none; background: #f2f2f2; border-bottom: 1px solid #cfcfcf; padding-left: 9px; font-size: 14px;
  grid-template-columns: 31px 33px 43px 27px 31px 21px 22px 21px 20px 32px 20px 24px 56px 29px 34px 32px 19px 21px 20px 22px 43px 143px 118px 18px 21px 32px 20px 21px 25px 27px 17px 20px 32px auto;
}
.ts { white-space: nowrap; color: #333; font-size: 14px; }
.filter { height: 28px; flex: none; background: #fff; border-bottom: 3px solid #d8d8d8; display: flex; align-items: center; padding-left: 4px; font-family: "DejaVu Sans Mono", monospace; font-size: 16.400px; }
.fi { width: 15px; height: 15px; }
.ftext { color: #888; margin-left: 7px; padding-top: 3px; }
.fx { margin-left: auto; margin-right: 5px; }

.grid { flex: 1; position: relative; background: #fff; }
.data {
  display: grid; width: 977px;
  grid-template-columns: 32px 248px 130px 177px 118px 118px 154px;
  grid-template-rows: 31px repeat(8, 27.400px);
  font-family: "DejaVu Sans Mono", "Noto Sans CJK SC", monospace; font-size: 16.600px; color: #222;
}
.h { background: #efefef; border-right: 1px solid #e2e2e2; border-bottom: 1px solid #e2e2e2; display: flex; align-items: center; padding-left: 5px; font-size: 16px; }
.h span { margin-left: 6px; flex: 1; letter-spacing: .2px; padding-top: 2px; }
.hid { background: #faf8ea; padding-left: 176px; }
.hr { padding-left: 35px; }
.corner { background: #f2f2f2; padding: 0; }
.hi { width: 18px; height: 18px; }
.so { width: 8px; height: 12px; margin-right: 9px; }
.n { background: #f2f2f2; border-right: 1px solid #e2e2e2; border-bottom: 1px solid #e2e2e2; text-align: center; line-height: 28px; }
.c { border-right: 1px solid #e2e2e2; border-bottom: 1px solid #e2e2e2; padding: 0 5px; line-height: 28px; white-space: nowrap; }
.num { text-align: right; }
.cj { font-family: "Noto Sans CJK SC", sans-serif; font-size: 15.500px; }
.redbox { position: absolute; left: 1px; top: 136px; width: 973px; height: 33px; border: 1px solid #e8202a; }
```
